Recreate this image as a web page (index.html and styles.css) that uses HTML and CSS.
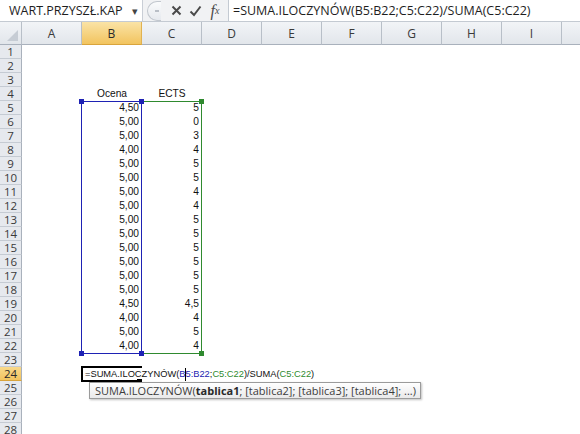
FILE: index.html
```html
<!DOCTYPE html>
<html lang="pl">
<head>
<meta charset="utf-8">
<title>Excel</title>
<link rel="stylesheet" href="styles.css">
</head>
<body>
<div class="app">
  <div class="fbar">
    <div class="namebox"><span class="name">WART.PRZYSZŁ.KAP</span><span class="dd">▾</span></div>
    <div class="tools">
      <span class="grip"><span class="dot"></span></span>
      <span class="tool x">
        <svg width="11" height="11" viewBox="0 0 11 11"><path d="M1.5 1.5 L9.5 9.5 M9.5 1.5 L1.5 9.5" stroke="#4a4a4a" stroke-width="2" fill="none"/></svg>
      </span>
      <span class="tool ok">
        <svg width="13" height="12" viewBox="0 0 13 12"><path d="M1.5 6.5 L5 10 L11.5 1.5" stroke="#4a4a4a" stroke-width="2" fill="none"/></svg>
      </span>
      <span class="tool fx"><i>f</i><sub>x</sub></span>
    </div>
    <div class="formula">=SUMA.ILOCZYNÓW(B5:B22;C5:C22)/SUMA(C5:C22)</div>
  </div>
  <div class="colheads">
    <div class="corner"><span class="tri"></span></div>
    <div class="ch">A</div>
    <div class="ch sel">B</div>
    <div class="ch">C</div>
    <div class="ch">D</div>
    <div class="ch">E</div>
    <div class="ch">F</div>
    <div class="ch">G</div>
    <div class="ch">H</div>
    <div class="ch">I</div>
    <div class="ch"></div>
  </div>
  <div class="grid">
    <div class="row"><div class="rh">1</div></div>
    <div class="row"><div class="rh">2</div></div>
    <div class="row"><div class="rh">3</div></div>
    <div class="row"><div class="rh">4</div><div class="c"></div><div class="c ctr">Ocena</div><div class="c ctr">ECTS</div></div>
    <div class="row"><div class="rh">5</div><div class="c"></div><div class="c num">4,50</div><div class="c num">5</div></div>
    <div class="row"><div class="rh">6</div><div class="c"></div><div class="c num">5,00</div><div class="c num">0</div></div>
    <div class="row"><div class="rh">7</div><div class="c"></div><div class="c num">5,00</div><div class="c num">3</div></div>
    <div class="row"><div class="rh">8</div><div class="c"></div><div class="c num">4,00</div><div class="c num">4</div></div>
    <div class="row"><div class="rh">9</div><div class="c"></div><div class="c num">5,00</div><div class="c num">5</div></div>
    <div class="row"><div class="rh">10</div><div class="c"></div><div class="c num">5,00</div><div class="c num">5</div></div>
    <div class="row"><div class="rh">11</div><div class="c"></div><div class="c num">5,00</div><div class="c num">4</div></div>
    <div class="row"><div class="rh">12</div><div class="c"></div><div class="c num">5,00</div><div class="c num">4</div></div>
    <div class="row"><div class="rh">13</div><div class="c"></div><div class="c num">5,00</div><div class="c num">5</div></div>
    <div class="row"><div class="rh">14</div><div class="c"></div><div class="c num">5,00</div><div class="c num">5</div></div>
    <div class="row"><div class="rh">15</div><div class="c"></div><div class="c num">5,00</div><div class="c num">5</div></div>
    <div class="row"><div class="rh">16</div><div class="c"></div><div class="c num">5,00</div><div class="c num">5</div></div>
    <div class="row"><div class="rh">17</div><div class="c"></div><div class="c num">5,00</div><div class="c num">5</div></div>
    <div class="row"><div class="rh">18</div><div class="c"></div><div class="c num">5,00</div><div class="c num">5</div></div>
    <div class="row"><div class="rh">19</div><div class="c"></div><div class="c num">4,50</div><div class="c num">4,5</div></div>
    <div class="row"><div class="rh">20</div><div class="c"></div><div class="c num">4,00</div><div class="c num">4</div></div>
    <div class="row"><div class="rh">21</div><div class="c"></div><div class="c num">5,00</div><div class="c num">5</div></div>
    <div class="row"><div class="rh">22</div><div class="c"></div><div class="c num">4,00</div><div class="c num">4</div></div>
    <div class="row"><div class="rh">23</div></div>
    <div class="row"><div class="rh sel">24</div><div class="c"></div><div class="c active"><span class="edit">=SUMA.ILOCZYNÓW(<span class="rb">B<span class="caret"></span>5:B22</span>;<span class="rg">C5:C22</span>)/SUMA(<span class="rg">C5:C22</span>)</span></div></div>
    <div class="row"><div class="rh">25</div></div>
    <div class="row"><div class="rh">26</div></div>
    <div class="row"><div class="rh">27</div></div>
    <div class="row"><div class="rh">28</div></div>

    <div class="range blue"></div>
    <div class="range green"></div>
    <span class="hd b1"></span><span class="hd b2"></span><span class="hd b3"></span><span class="hd b4"></span>
    <span class="hd g1"></span><span class="hd g2"></span>
    <span class="fill"></span>
    <div class="tip">SUMA.ILOCZYNÓW(<b>tablica1</b>; [tablica2]; [tablica3]; [tablica4]; ...)</div>
  </div>
</div>
</body>
</html>
```
FILE: styles.css
```css
html, body {
  margin: 0;
  padding: 0;
  background: #ffffff;
}
.app {
  width: 580px;
  height: 434px;
  overflow: hidden;
  font-family: "Liberation Sans", Arial, sans-serif;
}
.fbar {
  display: flex;
  height: 22px;
  background: #e3e7ec;
  border-bottom: 1px solid #c4cad2;
  box-sizing: border-box;
}
.namebox {
  width: 143px;
  display: flex;
  align-items: center;
  justify-content: space-between;
  background: #ffffff;
  border-right: 1px solid #c9ced6;
  padding: 0 4px 0 9px;
  box-sizing: border-box;
  font-family: "Open Sans", sans-serif;
  font-size: 12.5px;
  color: #1e1e1e;
}
.dd {
  font-size: 11px;
  color: #444;
}
.tools {
  width: 85px;
  display: flex;
  align-items: center;
  background: #f1f2f4;
}
.grip {
  width: 14px;
  height: 20px;
  margin-left: 4px;
  border: 1px solid #c2c7ce;
  border-right: none;
  border-radius: 10px 0 0 10px;
  background: linear-gradient(#fafbfc, #e6e9ee);
  box-sizing: border-box;
  display: flex;
  align-items: center;
  justify-content: center;
}
.dot {
  width: 4px;
  height: 2px;
  background: #b9bec6;
  margin-left: 4px;
}
.tool {
  display: flex;
  align-items: center;
  justify-content: center;
  width: 19px;
  height: 20px;
}
.x { margin-left: 6px; }
.fx {
  font-family: "Liberation Serif", serif;
  color: #4a4a4a;
  font-size: 16px;
  width: 20px;
}
.fx i { font-weight: normal; }
.fx sub { font-size: 10px; font-style: italic; vertical-align: -1px; }
.formula {
  flex: 1;
  background: #ffffff;
  border-left: 1px solid #c4cad2;
  padding-left: 4px;
  display: flex;
  align-items: center;
  font-family: "Open Sans", sans-serif;
  font-size: 12.5px;
  color: #1e1e1e;
  white-space: nowrap;
}
.colheads {
  display: grid;
  grid-template-columns: 22px repeat(10, 60px);
  height: 23px;
}
.corner, .ch {
  background: linear-gradient(#f2f4f7, #e2e6eb);
  border-right: 1px solid #b8bfc8;
  border-bottom: 1px solid #a9b1bc;
  box-sizing: border-box;
}
.corner {
  position: relative;
}
.tri {
  position: absolute;
  right: 3px;
  bottom: 3px;
  width: 0;
  height: 0;
  border-left: 11px solid transparent;
  border-bottom: 11px solid #c6ccd4;
}
.ch {
  display: flex;
  align-items: center;
  justify-content: center;
  font-family: "Open Sans", sans-serif;
  font-size: 12px;
  color: #3a3a3a;
}
.ch.sel {
  background: linear-gradient(#fae3a6, #f2c45f);
  border-right-color: #e1b250;
  border-bottom-color: #d9a43c;
  color: #2a2a2a;
}
.grid {
  position: relative;
}
.row {
  display: grid;
  grid-template-columns: 22px repeat(10, 60px);
  height: 14px;
}
.rh {
  background: #e6e9ee;
  border-right: 1px solid #a9b1bc;
  border-bottom: 1px solid #c5cbd3;
  box-sizing: border-box;
  font-family: "Open Sans", sans-serif;
  font-size: 11.5px;
  line-height: 13px;
  text-align: center;
  color: #3a3a3a;
}
.rh.sel {
  background: linear-gradient(#f8d98c, #f2c45f);
  border-bottom-color: #d9a43c;
  color: #2a2a2a;
}
.c {
  font-size: 10.2px;
  line-height: 14px;
  color: #111;
  white-space: nowrap;
}
.num {
  text-align: right;
  padding-right: 3px;
}
.ctr {
  text-align: center;
}
.active {
  position: relative;
  overflow: visible;
}
.edit {
  position: absolute;
  left: -1px;
  top: -1px;
  height: 16px;
  padding: 0 0 0 2px;
  border-top: 2px solid #000;
  border-left: 2px solid #000;
  border-bottom: 2px solid #000;
  box-sizing: border-box;
  width: 61px;
  overflow: visible;
  font-size: 9.3px;
  line-height: 12px;
}
.rb { color: #1b1bb0; position: relative; }
.rg { color: #2e8b2e; }
.caret {
  position: absolute;
  left: 6px;
  top: -1px;
  width: 1px;
  height: 13px;
  background: #000;
}
.range {
  position: absolute;
  top: 56px;
  height: 253px;
  width: 61px;
  box-sizing: border-box;
}
.range.blue {
  left: 81px;
  border: 1px solid #1e22b4;
}
.range.green {
  left: 141px;
  border: 1px solid #2f8a2f;
  border-left: none;
}
.hd {
  position: absolute;
  width: 5px;
  height: 5px;
}
.b1, .b2, .b3, .b4 { background: #1e22b4; }
.g1, .g2 { background: #2f8a2f; }
.b1 { left: 79px; top: 54px; }
.b2 { left: 139px; top: 54px; }
.b3 { left: 79px; top: 306px; }
.b4 { left: 139px; top: 306px; }
.g1 { left: 199px; top: 54px; }
.g2 { left: 199px; top: 306px; }
.fill {
  position: absolute;
  left: 137px;
  top: 334px;
  width: 5px;
  height: 4px;
  background: #000;
}
.tip {
  position: absolute;
  left: 89px;
  top: 337px;
  height: 17px;
  padding: 0 4px 0 5px;
  border: 1px solid #9b9b9b;
  background: linear-gradient(#ffffff, #e9e9ea);
  box-shadow: 1px 1px 2px rgba(0,0,0,0.25);
  font-family: "Open Sans", sans-serif;
  font-size: 11px;
  line-height: 16px;
  color: #3c3c3c;
  white-space: nowrap;
  box-sizing: border-box;
}
.tip b {
  font-weight: bold;
  color: #2a2a2a;
}
```
